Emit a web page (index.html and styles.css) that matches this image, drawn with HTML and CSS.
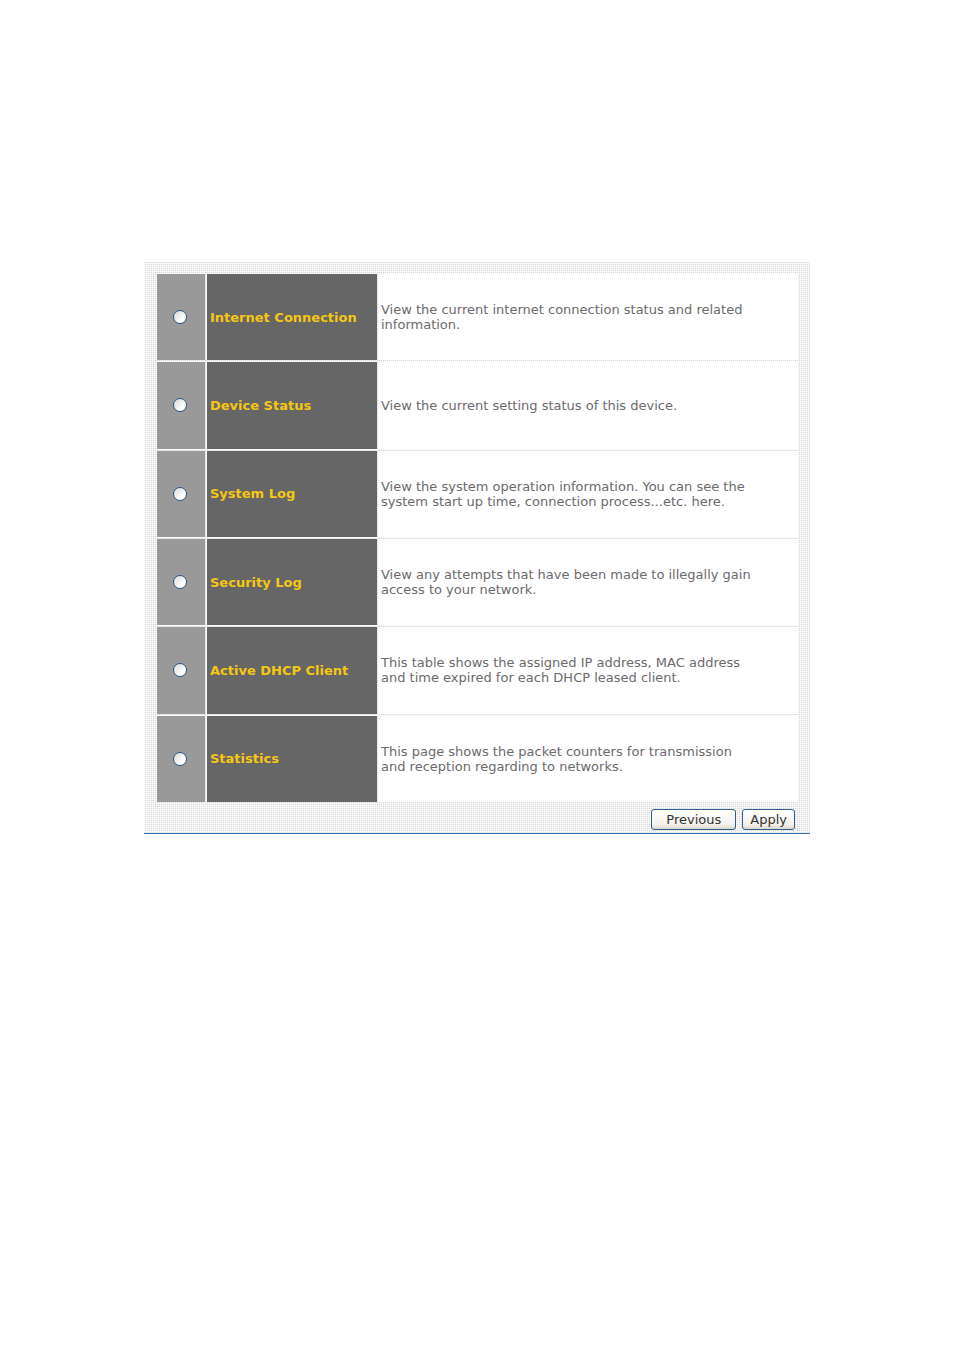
FILE: index.html
```html
<!DOCTYPE html>
<html lang="en">
<head>
<meta charset="utf-8">
<title>Status</title>
<link rel="stylesheet" href="styles.css">
</head>
<body>
<form class="panel">
  <table class="options">
    <tbody>
      <tr>
        <td class="pick"><input type="radio" name="page" id="internet"></td>
        <th class="name" scope="row"><label for="internet">Internet Connection</label></th>
        <td class="info">View the current internet connection status and related information.</td>
      </tr>
      <tr>
        <td class="pick"><input type="radio" name="page" id="device"></td>
        <th class="name" scope="row"><label for="device">Device Status</label></th>
        <td class="info">View the current setting status of this device.</td>
      </tr>
      <tr>
        <td class="pick"><input type="radio" name="page" id="system"></td>
        <th class="name" scope="row"><label for="system">System Log</label></th>
        <td class="info">View the system operation information. You can see the system start up time, connection process...etc. here.</td>
      </tr>
      <tr>
        <td class="pick"><input type="radio" name="page" id="security"></td>
        <th class="name" scope="row"><label for="security">Security Log</label></th>
        <td class="info">View any attempts that have been made to illegally gain access to your network.</td>
      </tr>
      <tr>
        <td class="pick"><input type="radio" name="page" id="dhcp"></td>
        <th class="name" scope="row"><label for="dhcp">Active DHCP Client</label></th>
        <td class="info">This table shows the assigned IP address, MAC address and time expired for each DHCP leased client.</td>
      </tr>
      <tr>
        <td class="pick"><input type="radio" name="page" id="statistics"></td>
        <th class="name" scope="row"><label for="statistics">Statistics</label></th>
        <td class="info">This page shows the packet counters for transmission and reception regarding to networks.</td>
      </tr>
    </tbody>
  </table>
  <div class="actions">
    <button type="button" class="button previous">Previous</button>
    <button type="button" class="button">Apply</button>
  </div>
</form>
</body>
</html>
```
FILE: styles.css
```css
body {
  margin: 0;
  padding: 262px 144px;
  background: #fff;
  font: 13px/15px Verdana, "DejaVu Sans", sans-serif;
  color: #6c6a6c;
}

.panel {
  padding: 10px 10px 3px 11px;
  border-bottom: 1px solid #3c6eb4;
  background: conic-gradient(#d8d8d8 25%, #f4f4f4 0 50%, #fff 0 75%, #f4f4f4 0) 0 0 / 2px 2px;
}

.options {
  width: 100%;
  height: 532px;
  border-spacing: 2px;
  table-layout: fixed;
}

.options td,
.options th {
  height: 86px;
  padding: 0;
  vertical-align: middle;
  text-align: left;
}

.options .pick {
  width: 46px;
  padding-right: 2px;
  background: #999;
}

.pick input {
  appearance: none;
  display: block;
  width: 14px;
  height: 14px;
  margin: 0 auto;
  box-sizing: border-box;
  border: 1px solid #2a5883;
  border-radius: 50%;
  background: linear-gradient(135deg, #d8d8d4, #fff 70%);
}

.pick input:checked {
  background: radial-gradient(circle, #2fa52f 35%, #fff 45%);
}

.options .name {
  width: 167px;
  padding-left: 3px;
  background: #666;
  color: #f5c713;
}

.options .info {
  padding: 0 42px 0 2px;
  background: #fff;
}

.actions {
  display: flex;
  justify-content: flex-end;
  gap: 6px;
  padding: 5px 5px 0 0;
}

.button {
  height: 21px;
  padding: 0 7px;
  border: 1px solid #2f5f8c;
  border-radius: 3px;
  background: linear-gradient(#fff, #f3f2ec 75%, #dcd8cc);
  color: #333;
  font: inherit;
}

.previous {
  padding: 0 14px;
}
```
